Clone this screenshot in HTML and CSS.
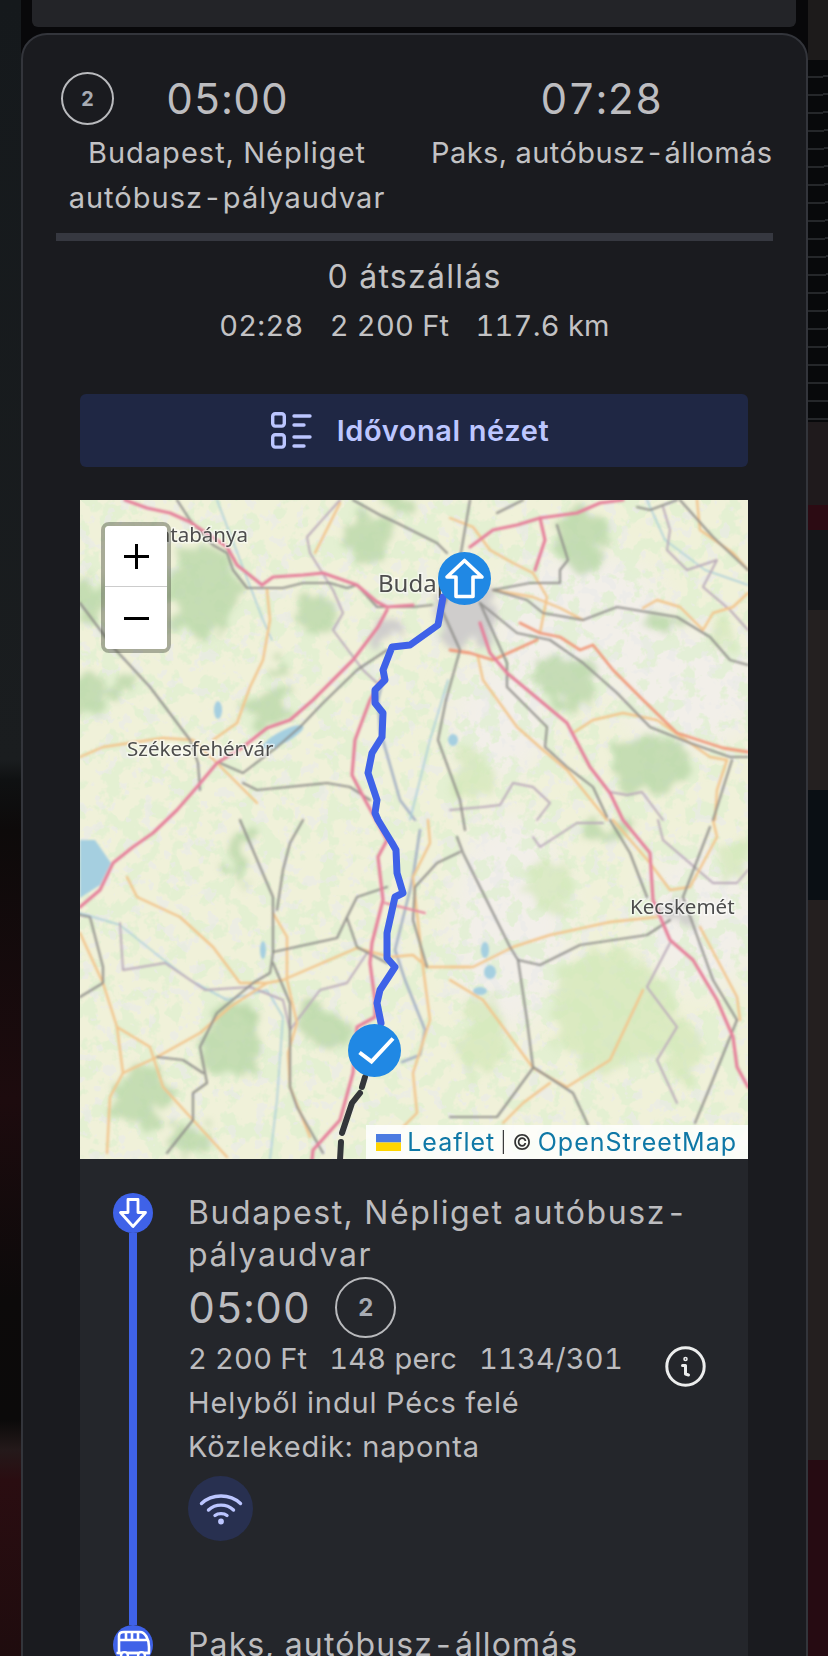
FILE: index.html
```html
<!DOCTYPE html>
<html>
  <head>
    <meta name="viewport" content="width=device-width, initial-scale=1" />
    <title>Útvonal</title>
    <link rel="stylesheet" href="styles.css">
  </head>
  <body>
    <div class="prev-card"></div>

    <div class="card">
      <div class="summary">
        <div class="summary-col col-from">
          <div class="time-row">
            <span class="line-badge">2</span>
            <span class="big-time">05:00</span>
          </div>
          <div class="place">Budapest, Népliget autóbusz-pályaudvar</div>
        </div>
        <div class="summary-col col-to">
          <div class="time-row">
            <span class="big-time">07:28</span>
          </div>
          <div class="place place-short">Paks, autóbusz-állomás</div>
        </div>
      </div>
      <div class="divider"></div>
      <div class="transfers">0 átszállás</div>
      <div class="trip-facts">
        <span>02:28</span>
        <span>2 200 Ft</span>
        <span>117.6 km</span>
      </div>

      <button class="timeline-btn" type="button">
        <svg class="timeline-icon" viewBox="0 0 41 37" fill="none" stroke="currentColor" stroke-width="3.4" stroke-linecap="round" stroke-linejoin="round">
          <rect x="1.7" y="1.7" width="11.6" height="12.4" rx="2.5" />
          <rect x="1.7" y="22.7" width="11.6" height="12.4" rx="2.5" />
          <path d="M23 4H39M23 13H33M23 25H39M23 34H33" />
        </svg>
        Idővonal nézet
      </button>

      <div class="map">
        <svg class="map-tiles" viewBox="0 0 668 659">
          <defs>
            <filter id="forest-edge" x="-10%" y="-10%" width="120%" height="120%">
              <feTurbulence type="fractalNoise" baseFrequency=".05" numOctaves="3" seed="11" result="n" />
              <feDisplacementMap in="SourceGraphic" in2="n" scale="38" xChannelSelector="R" yChannelSelector="G" />
              <feGaussianBlur stdDeviation="3.4" />
            </filter>
            <filter id="softer" x="-30%" y="-30%" width="160%" height="160%"><feGaussianBlur stdDeviation="14" /></filter>
            <filter id="tile-blur"><feGaussianBlur stdDeviation="0.8" /></filter>
            <filter id="mottle-green" x="0" y="0" width="100%" height="100%">
              <feTurbulence type="fractalNoise" baseFrequency=".05" numOctaves="4" seed="7" />
              <feColorMatrix values="0 0 0 0 .74  0 0 0 0 .87  0 0 0 0 .63  0 0 0 11 -5.4" />
              <feGaussianBlur stdDeviation=".7" />
            </filter>
            <filter id="mottle-grey" x="0" y="0" width="100%" height="100%">
              <feTurbulence type="fractalNoise" baseFrequency=".08" numOctaves="3" seed="21" />
              <feColorMatrix values="0 0 0 0 .83  0 0 0 0 .83  0 0 0 0 .82  0 0 0 13 -7.6" />
              <feGaussianBlur stdDeviation=".7" />
            </filter>
          </defs>

          <rect class="land" width="668" height="659" />
          <g filter="url(#softer)">
            <ellipse class="pale" cx="500" cy="120" rx="90" ry="70" />
            <ellipse class="pale" cx="610" cy="190" rx="70" ry="60" />
            <ellipse class="pale" cx="430" cy="420" rx="60" ry="110" />
            <ellipse class="pale" cx="420" cy="220" rx="50" ry="60" />
            <ellipse class="pale" cx="620" cy="420" rx="60" ry="70" />
          </g>
          <rect width="668" height="659" filter="url(#mottle-green)" opacity=".7" />
          <rect width="668" height="659" filter="url(#mottle-grey)" opacity=".6" />

          <g filter="url(#forest-edge)">
            <ellipse class="forest" cx="123" cy="90" rx="34" ry="50" />
            <ellipse class="forest" cx="8" cy="100" rx="20" ry="22" />
            <ellipse class="forest" cx="10" cy="197" rx="20" ry="24" />
            <ellipse class="forest" cx="187" cy="210" rx="24" ry="16" />
            <ellipse class="forest" cx="233" cy="113" rx="18" ry="22" />
            <ellipse class="forest" cx="290" cy="40" rx="24" ry="28" />
            <ellipse class="forest" cx="320" cy="3" rx="20" ry="9" />
            <ellipse class="forest" cx="203" cy="165" rx="11" ry="6" />
            <ellipse class="forest" cx="43" cy="187" rx="14" ry="12" />
            <ellipse class="forest" cx="63" cy="597" rx="26" ry="30" />
            <ellipse class="forest" cx="150" cy="543" rx="30" ry="36" />
            <ellipse class="forest" cx="170" cy="513" rx="8" ry="13" />
            <ellipse class="forest" cx="243" cy="527" rx="28" ry="20" transform="rotate(40 243 527)" />
            <ellipse class="forest" cx="110" cy="640" rx="24" ry="16" />
            <ellipse class="forest" cx="160" cy="357" rx="10" ry="24" />
            <ellipse class="forest" cx="503" cy="40" rx="26" ry="36" />
            <ellipse class="forest" cx="487" cy="180" rx="34" ry="22" transform="rotate(30 487 180)" />
            <ellipse class="forest" cx="570" cy="263" rx="40" ry="28" />
            <ellipse class="forest" cx="587" cy="123" rx="18" ry="10" />
            <ellipse class="forest" cx="530" cy="330" rx="28" ry="8" />
            <ellipse class="meadow" cx="390" cy="273" rx="18" ry="24" />
            <ellipse class="meadow" cx="470" cy="387" rx="26" ry="26" />
            <ellipse class="meadow" cx="530" cy="510" rx="60" ry="58" />
            <ellipse class="meadow" cx="403" cy="537" rx="24" ry="38" />
            <ellipse class="meadow" cx="603" cy="547" rx="20" ry="34" />
            <ellipse class="meadow" cx="653" cy="360" rx="14" ry="20" />
            <ellipse class="meadow" cx="640" cy="130" rx="16" ry="14" />
            <ellipse class="urban" cx="385" cy="110" rx="32" ry="38" />
            <ellipse class="urban" cx="305" cy="130" rx="16" ry="12" />
            <ellipse class="urban" cx="597" cy="410" rx="14" ry="10" />
          </g>

          <g filter="url(#tile-blur)">
            <path class="water" d="M0 340H15L31 363 20 385 0 398Z" />
            <ellipse class="water" cx="203" cy="237" rx="23" ry="6" transform="rotate(-28 203 237)" />
            <ellipse class="water" cx="405" cy="450" rx="4" ry="8" />
            <ellipse class="water" cx="410" cy="472" rx="6" ry="7" />
            <ellipse class="water" cx="400" cy="491" rx="7" ry="4" />
            <ellipse class="water" cx="373" cy="240" rx="5" ry="6" />
            <ellipse class="water" cx="183" cy="450" rx="3" ry="9" />
            <ellipse class="water" cx="138" cy="210" rx="4" ry="9" />

            <polyline class="river" points="137,0 160,60 183,120 192,140" />
            <polyline class="river" points="-10,410 40,425 80,457 110,480 147,500 187,490 203,517 197,600 190,659" />
            <polyline class="danube" points="340,330 334,370 330,390 315,450 325,480 345,530 340,555 322,562" />
            <polyline class="danube" points="310,150 298,200 300,230 320,300 335,320" />
            <polyline class="river" points="567,0 585,40 625,70 668,85" />
            <polyline class="river" points="368,180 350,240 330,320" />

            <polyline class="border" points="260,0 227,37 230,53 253,90 263,113 253,130 283,170 297,183" />
            <polyline class="border" points="40,423 43,470 85,463 125,490 170,487 203,500 210,530 240,490 267,483 287,453" />
            <polyline class="border" points="583,7 590,30 587,50 607,70 637,60 623,87 650,110 668,130" />
            <polyline class="border" points="370,310 403,307 420,305 433,283 453,287 470,303 457,320" />
            <polyline class="border" points="530,292 547,295 562,292 583,320" />
            <polyline class="border" points="578,320 583,340 633,383 657,383 668,370" />
            <polyline class="border" points="453,337 460,347 497,323 523,323" />
            <polyline class="border" points="590,443 567,487 597,527 577,560 597,603" />

            <polyline class="orange" points="187,90 190,120 183,160 170,187 157,223 133,240" />
            <polyline class="orange" points="260,3 243,37 235,53" />
            <polyline class="orange" points="0,257 23,247 83,238 113,240 137,263 177,303" />
            <polyline class="orange" points="47,377 57,397 100,417 133,447 160,483 187,483 203,480 233,467 277,448 310,457 333,455 347,467 390,467" />
            <polyline class="orange" points="193,413 207,437 207,480 217,523 208,553 210,587 230,637" />
            <polyline class="orange" points="0,433 23,483 37,527 43,573 30,597 27,653" />
            <polyline class="orange" points="37,527 70,547 83,587 113,620 147,657" />
            <polyline class="orange" points="43,573 77,557 120,533 150,507 187,483" />
            <polyline class="orange" points="348,320 350,343 333,377 337,413 343,467 350,520 333,573 337,613 323,627" />
            <polyline class="orange" points="370,18 393,27 410,50 433,63 453,73 467,97 460,133" />
            <polyline class="orange" points="413,90 453,97 480,108 503,120" />
            <polyline class="orange" points="563,108 577,100 600,107 623,130 633,113 653,107 668,93" />
            <polyline class="orange" points="398,157 403,180 437,227 463,250 487,270 527,320" />
            <polyline class="orange" points="493,233 513,220 543,213 577,220 630,257 647,260 637,290 635,320" />
            <polyline class="orange" points="370,467 393,467 433,447 470,435 530,422 577,417" />
            <polyline class="orange" points="370,480 403,500 453,568 487,587 530,560 563,490" />
            <polyline class="orange" points="470,583 443,603 423,623" />
            <polyline class="orange" points="533,320 570,363 590,390 610,387 637,337 633,320" />
            <polyline class="orange" points="620,427 657,497 660,520" />
            <polyline class="orange" points="617,0 620,30 653,53 668,70" />
            <polyline class="road-red" points="370,150 390,153 413,160 457,140" />
            <polyline class="road-red" points="440,123 460,133 480,137 500,150 513,145 533,170 563,200 597,233 643,248 668,252" />

            <polyline class="grey" points="97,0 110,20 133,45 147,53 153,70 167,88 203,88 223,83 250,83 267,88 277,85 297,107 333,107 352,105" />
            <polyline class="grey" points="0,103 33,147 70,187 110,240 118,263 120,290" />
            <polyline class="grey" points="273,0 300,15 317,23 357,43 367,53" />
            <polyline class="grey" points="307,150 277,170 243,203 220,227 197,247 163,273 140,263" />
            <polyline class="grey" points="163,283 177,290 247,283 270,287 290,300" />
            <polyline class="grey" points="160,320 193,397 193,453 190,473 173,483 137,513 120,547 127,583 113,593 113,620 87,653" />
            <polyline class="grey" points="223,320 210,343 203,370 197,410" />
            <polyline class="grey" points="193,452 257,438 267,417 277,397 307,387" />
            <polyline class="grey" points="267,418 277,447 307,463" />
            <polyline class="grey" points="193,463 210,503 210,587 217,607 243,653" />
            <polyline class="grey" points="-10,413 10,417 23,467 23,483 0,497" />
            <polyline class="grey" points="77,557 103,560 123,573" />
            <polyline class="grey" points="380,352 357,363 335,387 333,420 347,467" />
            <polyline class="grey" points="477,25 488,60 480,70 480,83 450,83 413,90" />
            <polyline class="grey" points="413,90 447,100 463,113 503,120 537,107 597,117 630,137 650,160 668,165" />
            <polyline class="grey" points="417,13 443,0" />
            <polyline class="grey" points="557,7 570,10 597,0" />
            <polyline class="grey" points="600,0 633,37 668,70" />
            <polyline class="grey" points="400,103 437,133 470,140 503,163 537,193 570,227 610,243 650,257 668,257" />
            <polyline class="grey" points="400,103 427,163 427,187 467,227 465,247 487,267 513,287 527,317" />
            <polyline class="grey" points="652,260 633,320" />
            <polyline class="grey" points="377,337 383,353 430,447 438,460 447,520 453,567 493,593 508,625" />
            <polyline class="grey" points="438,460 460,465 500,445 567,435 590,420" />
            <polyline class="grey" points="453,568 417,617 370,617" />
            <polyline class="grey" points="530,320 550,353 567,397" />
            <polyline class="grey" points="630,327 603,397 633,480 657,520" />
            <polyline class="grey" points="657,520 630,587 615,623" />
            <polyline class="grey" points="390,0 378,70 362,110 380,150 366,200" />
            <polyline class="grey" points="366,200 358,240 380,300 385,330" />

            <polyline class="pink" points="45,0 67,8 90,13 110,22 147,47 157,65 182,85 193,77 223,75 243,73 277,85 297,102 307,107 333,105" />
            <polyline class="pink" points="307,110 298,127 273,160 253,180 233,200 210,220 187,228 163,247 137,263 117,287 97,310 73,333 53,347 33,363 20,390 0,407" />
            <polyline class="pink" points="303,177 290,200 275,240 272,275 285,300 300,327 307,340 298,357 303,400 292,443 290,463 295,500 295,517 277,527 273,573 260,620 233,650 232,660" />
            <polyline class="pink" points="390,47 413,30 437,25 460,18 497,13 520,3 543,0" />
            <polyline class="pink" points="460,18 465,40 455,70" />
            <polyline class="pink" points="400,123 410,153 427,173 463,203 487,223 510,267 530,293 543,320 570,353 573,400 590,440 613,460 637,500 653,537 657,567 668,587" />
            <polyline class="pink thin" points="305,403 345,413" />
          </g>

          <g class="map-labels">
            <text x="69" y="42">Tatabánya</text>
            <text x="298" y="92" class="label-big">Budapest</text>
            <text x="47" y="256">Székesfehérvár</text>
            <text x="550" y="414">Kecskemét</text>
          </g>

          <polyline class="route" points="363,97 358,125 330,145 312,147 303,170 305,180 295,190 295,203 303,213 302,237 292,253 288,273 297,300 295,313 298,320 312,343 316,350 317,373 323,393 315,397 307,433 307,458 315,467 300,490 297,503 301,523" />
          <polyline class="route-dashed" points="285,577 282,587" />
          <polyline class="route-dashed" points="280,593 272,603 262,633" />
          <polyline class="route-dashed" points="261,642 260,660" />
        </svg>

        <div class="zoom-ctrl">
          <span class="zoom-btn zoom-plus"><i></i></span>
          <span class="zoom-btn"><i></i></span>
        </div>

        <svg class="marker marker-from" viewBox="0 0 53 53">
          <circle cx="26.5" cy="26.5" r="26.5" fill="#2088e4" />
          <path d="M26.5 8.5 44 25H35V44.5H18V25H9Z" fill="none" stroke="#fff" stroke-width="3.6" stroke-linejoin="round" />
        </svg>
        <svg class="marker marker-to" viewBox="0 0 53 53">
          <circle cx="26.5" cy="26.5" r="26.5" fill="#2088e4" />
          <path d="M11.5 28.5 23.5 37.5 45 14.5" fill="none" stroke="#fff" stroke-width="4" />
        </svg>

        <div class="attribution">
          <svg class="flag" viewBox="0 0 25 17"><rect width="25" height="8.5" fill="#4c7be1" /><rect y="8.5" width="25" height="8.5" fill="#ffd500" /></svg>
          <a>Leaflet</a> <span class="sep">|</span> <span class="copy">©</span> <a>OpenStreetMap</a>
        </div>
      </div>

      <div class="stops">
        <div class="stop">
          <div class="rail">
            <svg class="rail-dot" viewBox="0 0 40 40">
              <circle cx="20" cy="20" r="20" fill="#3f62e8" />
              <path d="M15 6.5H25V19.5H32.5L20 33.5 7.5 19.5H15Z" fill="none" stroke="#fff" stroke-width="2.8" stroke-linejoin="round" />
            </svg>
            <div class="rail-line"></div>
          </div>
          <div class="stop-body">
            <div class="stop-name">Budapest, Népliget autóbusz-pályaudvar</div>
            <div class="stop-time-row">
              <span class="big-time">05:00</span>
              <span class="line-badge line-badge-lg">2</span>
            </div>
            <div class="fare-row">
              <div class="fare-facts">
                <span>2 200 Ft</span>
                <span>148 perc</span>
                <span>1134/301</span>
              </div>
              <svg class="info-icon" viewBox="0 0 41 41" fill="none" stroke="#eceded" stroke-width="3" stroke-linecap="round" stroke-linejoin="round">
                <circle cx="20.5" cy="20.5" r="18.7" />
                <path d="M17.5 19.5H20.5V28L23.5 29" />
                <circle cx="20.5" cy="13" r=".8" />
              </svg>
            </div>
            <div class="stop-note">Helyből indul Pécs felé</div>
            <div class="stop-note">Közlekedik: naponta</div>
            <div class="service-icon">
              <svg viewBox="0 0 65 65" fill="none" stroke="#bcc6ff" stroke-width="3.4" stroke-linecap="round">
                <path d="M13.5 27.5C24 17.5 42 17.5 52.5 27.5" />
                <path d="M20.5 34C27.5 27.5 38.5 27.5 45.5 34" />
                <path d="M27 39.5C30 37 36 37 39 39.5" />
                <circle cx="33" cy="45.5" r="1.2" fill="#bcc6ff" />
              </svg>
            </div>
          </div>
        </div>

        <div class="stop">
          <div class="rail">
            <svg class="rail-dot" viewBox="0 0 40 40">
              <circle cx="20" cy="20" r="20" fill="#3f62e8" />
              <path d="M6 28V11C6 8 8 7 11 7H27C32 7 36 14 36 22V28ZM6 15H35M13 7V15M19 7V15M25 7V15" fill="none" stroke="#fff" stroke-width="2.6" stroke-linejoin="round" />
              <path d="M3.5 28H37" stroke="#fff" stroke-width="2.6" />
              <circle cx="11.5" cy="30.5" r="3.4" fill="#3f62e8" stroke="#fff" stroke-width="2.4" />
              <circle cx="28.5" cy="30.5" r="3.4" fill="#3f62e8" stroke="#fff" stroke-width="2.4" />
            </svg>
          </div>
          <div class="stop-body">
            <div class="stop-name stop-name-short">Paks, autóbusz-állomás</div>
          </div>
        </div>
      </div>
    </div>
  </body>
</html>
```

FILE: styles.css
```css
html, body {
  height: 1656px;
  overflow: hidden;
}

body {
  margin: 0;
  font-family: Inter, "Noto Sans", sans-serif;
  font-variant-numeric: tabular-nums;
  color: #c2c2c4;
  background-color: #08080a;
  background-repeat: no-repeat;
  background-image:
    repeating-linear-gradient(178deg, #08090b 0 16px, #25272a 16px 18px),
    linear-gradient(180deg, #1d1b1b 0 60px, #08090b 60px 422px, #1f1a1c 422px 505px, #2c0b13 505px 530px, #151619 530px 610px, #242020 610px 790px, #0a0f14 790px 900px, #241f1f 900px 1460px, #260b12 1460px),
    linear-gradient(180deg, #15191c 0, #1a1d1f 760px, #0f1112 780px, #0d0a0a 830px, #1d0b0e 1100px, #0c0a0a 1300px, #0b0a0a 1420px, #24191a 1450px, #2a0d11 1480px, #1f0c0e 1656px);
  background-size: 20px 362px, 20px 1656px, 21px 1656px;
  background-position: right 0 top 60px, right 0 top 0, left 0 top 0;
}

.prev-card {
  height: 27px;
  margin: 0 32px;
  background: #232428;
  border-radius: 0 0 6px 6px;
}

.card {
  margin: 6px 20px 0 21px;
  padding: 37px 34px 0;
  height: 1700px;
  background: #1a1b1f;
  border: 2px solid #33353b;
  border-radius: 26px;
}

/* summary on top of the card */
.summary {
  display: flex;
}

.summary-col {
  text-align: center;
}

.col-from {
  width: 346px;
  margin-left: -3px;
}

.col-to {
  width: 341px;
  margin-left: 31px;
}

.time-row {
  display: flex;
  align-items: center;
  justify-content: center;
  height: 53px;
}

.big-time {
  font-size: 42px;
  letter-spacing: .01em;
  line-height: 53px;
  color: #bdbdc0;
}

.line-badge {
  display: flex;
  align-items: center;
  justify-content: center;
  box-sizing: border-box;
  width: 53px;
  height: 53px;
  border: 2px solid #b9babd;
  border-radius: 50%;
  font-size: 20px;
  font-weight: 700;
  color: #a7abb3;
}

.col-from .time-row {
  justify-content: flex-start;
  padding-left: 7px;
  gap: 52px;
}

.place {
  margin-top: 5px;
  font-size: 29px;
  letter-spacing: .035em;
  line-height: 45px;
}

.place-short {
  letter-spacing: .016em;
  white-space: nowrap;
}

.divider {
  height: 8px;
  margin: 13px 0 0 -1px;
  width: 717px;
  background: #363840;
}

.transfers {
  margin-top: 14px;
  text-align: center;
  font-size: 32px;
  letter-spacing: .04em;
  line-height: 44px;
}

.trip-facts {
  display: flex;
  justify-content: center;
  gap: 26px;
  margin-top: 6px;
  font-size: 29px;
  letter-spacing: .01em;
  line-height: 42px;
}

.timeline-btn {
  display: flex;
  align-items: center;
  justify-content: center;
  gap: 25px;
  width: 668px;
  height: 73px;
  margin: 47px 0 0 23px;
  padding: 0 8px 0 0;
  border: none;
  border-radius: 6px;
  background: #1f2744;
  color: #bcc6ff;
  font-family: inherit;
  font-size: 29px;
  font-weight: 600;
  letter-spacing: .6px;
  cursor: pointer;
}

.timeline-icon {
  width: 41px;
  height: 37px;
}

/* map */
.map {
  position: relative;
  width: 668px;
  height: 659px;
  margin: 33px 0 0 23px;
  overflow: hidden;
}

.map-tiles {
  display: block;
  width: 668px;
  height: 659px;
}

.land { fill: #f0f1d9; }
.pale { fill: #f2efe9; }
.forest { fill: #b7d6a6; opacity: .75; }
.meadow { fill: #cfe6b4; opacity: .65; }
.urban { fill: #cfcdcc; }
.water { fill: #a5cfe0; }

.map-tiles polyline {
  fill: none;
  stroke-linejoin: round;
  stroke-linecap: round;
}

.river { stroke: #a8cdd9; stroke-width: 1.5; }
.danube { stroke: #a7b3c4; stroke-width: 2.6; }
.border { stroke: #b9a9b9; stroke-width: 1.9; }
.orange { stroke: #f2c58d; stroke-width: 2.4; }
.road-red { stroke: #f09a7c; stroke-width: 2.8; }
.grey { stroke: #8d8c88; stroke-width: 2.2; opacity: .9; }
.pink { stroke: #e5819b; stroke-width: 3.2; }
.pink.thin { stroke-width: 2; }

.map-labels text {
  font-family: "Noto Sans", sans-serif;
  font-size: 20.5px;
  fill: #4d4d4d;
  stroke: rgba(255, 255, 255, .55);
  stroke-width: 3px;
  paint-order: stroke;
}

.map-labels .label-big {
  font-size: 24px;
}

.map-tiles .route {
  stroke: #3f62e8;
  stroke-width: 7;
}

.map-tiles .route-dashed {
  stroke: #33363a;
  stroke-width: 6;
}

.zoom-ctrl {
  position: absolute;
  left: 21px;
  top: 22px;
  width: 62px;
  border: 4px solid rgba(70, 75, 60, .42);
  border-radius: 8px;
  background-clip: padding-box;
}

.zoom-btn {
  display: flex;
  align-items: center;
  justify-content: center;
  height: 62px;
  background: #fff;
  border-radius: 0 0 4px 4px;
}

.zoom-btn i {
  display: block;
  position: relative;
  width: 25px;
  height: 3px;
  background: #000;
}

.zoom-plus {
  border-bottom: 1px solid #ccc;
  border-radius: 4px 4px 0 0;
  height: 60px;
}

.zoom-plus i::after {
  content: "";
  position: absolute;
  left: 11px;
  top: -11px;
  width: 3px;
  height: 25px;
  background: #000;
}

.marker {
  position: absolute;
  width: 53px;
  height: 53px;
}

.marker-from {
  left: 358px;
  top: 52px;
}

.marker-to {
  left: 268px;
  top: 524px;
}

.attribution {
  position: absolute;
  right: 0;
  bottom: 0;
  display: flex;
  align-items: center;
  gap: 5px;
  height: 34px;
  padding: 0 11px 0 10px;
  background: rgba(255, 255, 255, .82);
  color: #333;
  font-size: 25px;
  letter-spacing: 1px;
  white-space: nowrap;
}

.attribution a {
  color: #0f78a6;
}

.sep {
  font-size: 20px;
  font-weight: 300;
}

.copy {
  font-size: 21px;
}

.flag {
  width: 25px;
  height: 17px;
  margin-right: 1px;
}

/* stops under the map */
.stops {
  width: 668px;
  margin-left: 23px;
  padding-top: 34px;
  background: #24262b;
  color: #bcbcbf;
}

.stop {
  display: flex;
}

.rail {
  display: flex;
  flex-direction: column;
  align-items: center;
  flex: none;
  width: 40px;
  margin: 0 35px 0 33px;
}

.rail-dot {
  flex: none;
  display: block;
  width: 40px;
  height: 40px;
}

.rail-line {
  flex: 1;
  width: 8px;
  background: #3f62e8;
}

.stop-body {
  flex: 1;
  padding: 0 42px 84px 0;
  min-width: 0;
}

.stop-name {
  margin-top: -1px;
  font-size: 32px;
  letter-spacing: .05em;
  line-height: 42px;
}

.stop-name-short {
  letter-spacing: .035em;
}

.stop-time-row {
  display: flex;
  align-items: center;
  gap: 25px;
  margin-top: 1px;
  height: 60px;
}

.line-badge-lg {
  width: 61px;
  height: 61px;
  font-size: 24px;
}

.fare-row {
  display: flex;
  align-items: flex-start;
  justify-content: space-between;
}

.fare-facts {
  display: flex;
  gap: 22px;
  font-size: 29px;
  letter-spacing: .008em;
  line-height: 44px;
}

.info-icon {
  flex: none;
  width: 41px;
  height: 41px;
  margin: 9px 0 -6px;
}

.stop-note {
  font-size: 29px;
  letter-spacing: .03em;
  line-height: 44px;
}

.service-icon {
  width: 65px;
  height: 65px;
  margin-top: 7px;
  border-radius: 50%;
  background: #283050;
}

.service-icon svg {
  display: block;
}
```
